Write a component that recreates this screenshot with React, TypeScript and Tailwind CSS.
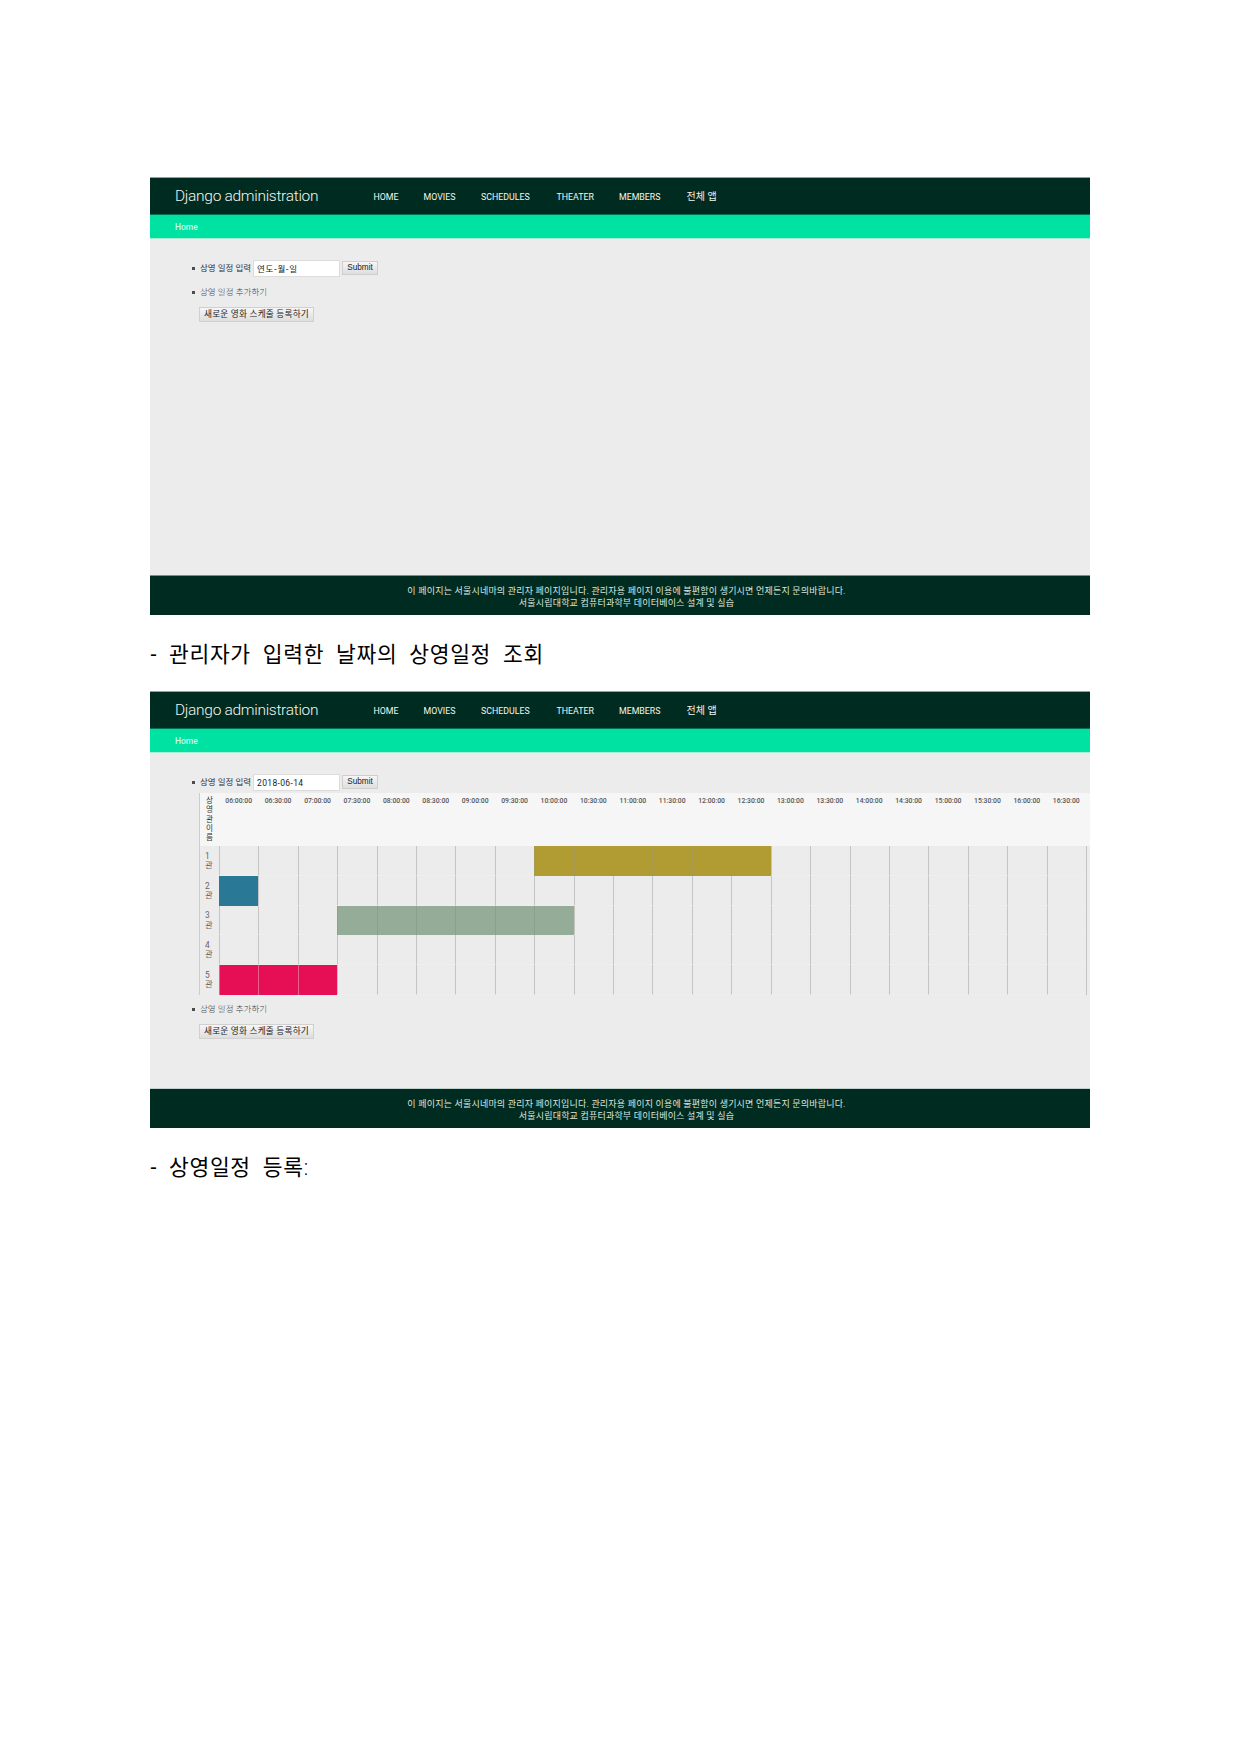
import React from "react";

const NAV = [
  { label: "HOME", style: "w-[50px]" },
  { label: "MOVIES", style: "w-[57.5px]" },
  { label: "SCHEDULES", style: "w-[75.5px]" },
  { label: "THEATER", style: "w-[62.5px]" },
  { label: "MEMBERS", style: "w-[67.5px]" },
  { label: "전체 앱", style: "w-[40px] whitespace-nowrap text-[10px]" },
];

const TIMES = Array.from({ length: 22 }, (_, i) => {
  const hour = String(6 + Math.floor(i / 2)).padStart(2, "0");
  return `${hour}:${i % 2 ? "30" : "00"}:00`;
});

type Room = { name: string; from: number; to: number; fill: string; line: string };

const PLAIN_LINE = "border-l-[#c4c4c4]";

const ROOMS: Room[] = [
  { name: "1", from: 8, to: 14, fill: "bg-[#b09c32]", line: "border-l-[#a89a52]" },
  { name: "2", from: 0, to: 1, fill: "bg-[#297896]", line: "border-l-[#297896]" },
  { name: "3", from: 3, to: 9, fill: "bg-[#94ac98]", line: "border-l-[#8ba08f]" },
  { name: "4", from: 0, to: 0, fill: "", line: "" },
  { name: "5", from: 0, to: 3, fill: "bg-[#e60f56]", line: "border-l-[#e9608e]" },
];

function TopBar() {
  return (
    <>
      <header className="flex h-[38px] items-center border-b border-t border-b-[#007353] border-t-[#8fa59f] bg-[#002b20] pl-[25px] text-[#f3f6ee]">
        <h1 className="w-[198px] whitespace-nowrap pt-[2px] text-[15.5px] font-light leading-none tracking-[-0.3px]">
          Django administration
        </h1>
        <nav className="flex items-center pl-[0.5px] pt-[2px] text-[8.8px] leading-none">
          {NAV.map((item) => (
            <a key={item.label} className={item.style}>
              {item.label}
            </a>
          ))}
        </nav>
      </header>
      <div className="flex h-[24px] items-center border-b border-[#a6edd4] bg-[#00e2a1] pl-[25px] pt-px text-[8.5px] font-medium leading-none text-[#c9fbe9]">
        Home
      </div>
    </>
  );
}

function Bullet() {
  return <span className="mr-[5px] mt-px h-[3px] w-[3px] shrink-0 bg-[#4c4c4c]" />;
}

function DateRow({ value, korean }: { value: string; korean?: boolean }) {
  return (
    <div className="flex h-[18px] items-center pl-[42px]">
      <Bullet />
      <span className="w-[53px] whitespace-nowrap text-[8.5px] leading-none text-[#333]">상영 일정 입력</span>
      <span
        className={`flex h-[17px] w-[87px] items-center border border-[#dcdcdc] bg-white pl-[3px] pt-[2px] leading-none text-[#222] ${
          korean ? "text-[8.5px] tracking-[0.8px]" : "text-[8.5px] tracking-[0.35px]"
        }`}
      >
        {value}
      </span>
      <button className="ml-[2px] flex h-[14px] w-[36px] items-center justify-center border border-[#cfcfcf] bg-gradient-to-b from-[#f6f6f6] to-[#dedede] pt-px font-['Liberation_Sans'] text-[8.2px] leading-none text-[#222]">
        Submit
      </button>
    </div>
  );
}

function AddSchedule() {
  return (
    <>
      <div className="flex h-[12px] items-center pl-[42px]">
        <Bullet />
        <span className="whitespace-nowrap text-[8.5px] font-light leading-none tracking-[0.05px] text-[#444]">
          상영 일정 추가하기
        </span>
      </div>
      <button className="ml-[49px] mt-[9px] flex h-[15px] w-[115px] items-center justify-center whitespace-nowrap border border-[#d0d0d0] bg-gradient-to-b from-[#f6f6f6] to-[#dedede] text-[8.7px] leading-none tracking-[0.18px] text-[#222]">
        새로운 영화 스케줄 등록하기
      </button>
    </>
  );
}

function Timetable() {
  return (
    <div className="ml-[49px] overflow-hidden border-l border-[#cccccc] text-[#333]">
      <div className="flex h-[53px] bg-[#f6f6f6]">
        <div className="flex w-[19px] shrink-0 flex-col items-center pt-[3px] text-[7.6px] leading-[9.3px]">
          {"상영관이름".split("").map((c) => (
            <span key={c} className="h-[9.3px]">
              {c}
            </span>
          ))}
        </div>
        {TIMES.map((t) => (
          <div
            key={t}
            className="w-[39.42px] shrink-0 pt-[4px] text-center text-[6.8px] font-medium leading-[8px] text-[#555]"
          >
            {t}
          </div>
        ))}
      </div>
      {ROOMS.map((room) => (
        <div key={room.name} className="flex h-[29.75px]">
          <div className="w-[19px] shrink-0 pl-[5px] pt-[5.8px] text-[8.4px] leading-[9.4px] text-[#666]">
            {room.name}
            <br />관
          </div>
          {TIMES.map((t, i) => {
            const busy = i >= room.from && i < room.to;
            return (
              <div
                key={t}
                className={`w-[39.42px] shrink-0 border-l ${
                  busy ? `${room.fill} ${room.line}` : `border-b border-b-[#eeeeee] ${PLAIN_LINE}`
                }`}
              />
            );
          })}
          <div className={`w-[5px] shrink-0 border-l ${PLAIN_LINE}`} />
        </div>
      ))}
    </div>
  );
}

function SiteFooter({ edge }: { edge: string }) {
  return (
    <footer
      className={`mt-auto h-[40px] border-t ${edge} bg-[#002b20] pl-[13px] pt-[9px] text-center text-[9px] leading-[12px] tracking-[0.19px] text-[#dde5df]`}
    >
      <p>이 페이지는 서울시네마의 관리자 페이지입니다. 관리자용 페이지 이용에 불편함이 생기시면 언제든지 문의바랍니다.</p>
      <p>서울시립대학교 컴퓨터과학부 데이터베이스 설계 및 실습</p>
    </footer>
  );
}

function Caption({ children }: { children: React.ReactNode }) {
  return (
    <p className="whitespace-nowrap pl-[0.5px] text-[21.5px] leading-[30px] tracking-[0.65px] text-black [word-spacing:6px]">
      {children}
    </p>
  );
}

export default function App() {
  return (
    <main className="flex h-[1754px] w-[1240px] flex-col bg-white px-[150px] pt-[177px] font-[Roboto,'Noto_Sans_CJK_KR',sans-serif]">
      <section className="flex h-[438px] flex-col bg-[#ececec]">
        <TopBar />
        <div className="pt-[20px]">
          <DateRow value="연도-월-일" korean />
          <div className="h-[9px]" />
          <AddSchedule />
        </div>
        <SiteFooter edge="border-t-[#6b9787]" />
      </section>
      <div className="h-[76px] pt-[25px]">
        <Caption>- 관리자가 입력한 날짜의 상영일정 조회</Caption>
      </div>
      <section className="flex h-[437px] flex-col bg-[#ececec]">
        <TopBar />
        <div className="pt-[20px]">
          <DateRow value="2018-06-14" />
          <div className="h-[2px]" />
          <Timetable />
          <div className="h-[8px]" />
          <AddSchedule />
        </div>
        <SiteFooter edge="border-t-[#c0d0ca]" />
      </section>
      <div className="pt-[25px]">
        <Caption>
          - 상영일정 등록<span className="font-light">:</span>
        </Caption>
      </div>
    </main>
  );
}
